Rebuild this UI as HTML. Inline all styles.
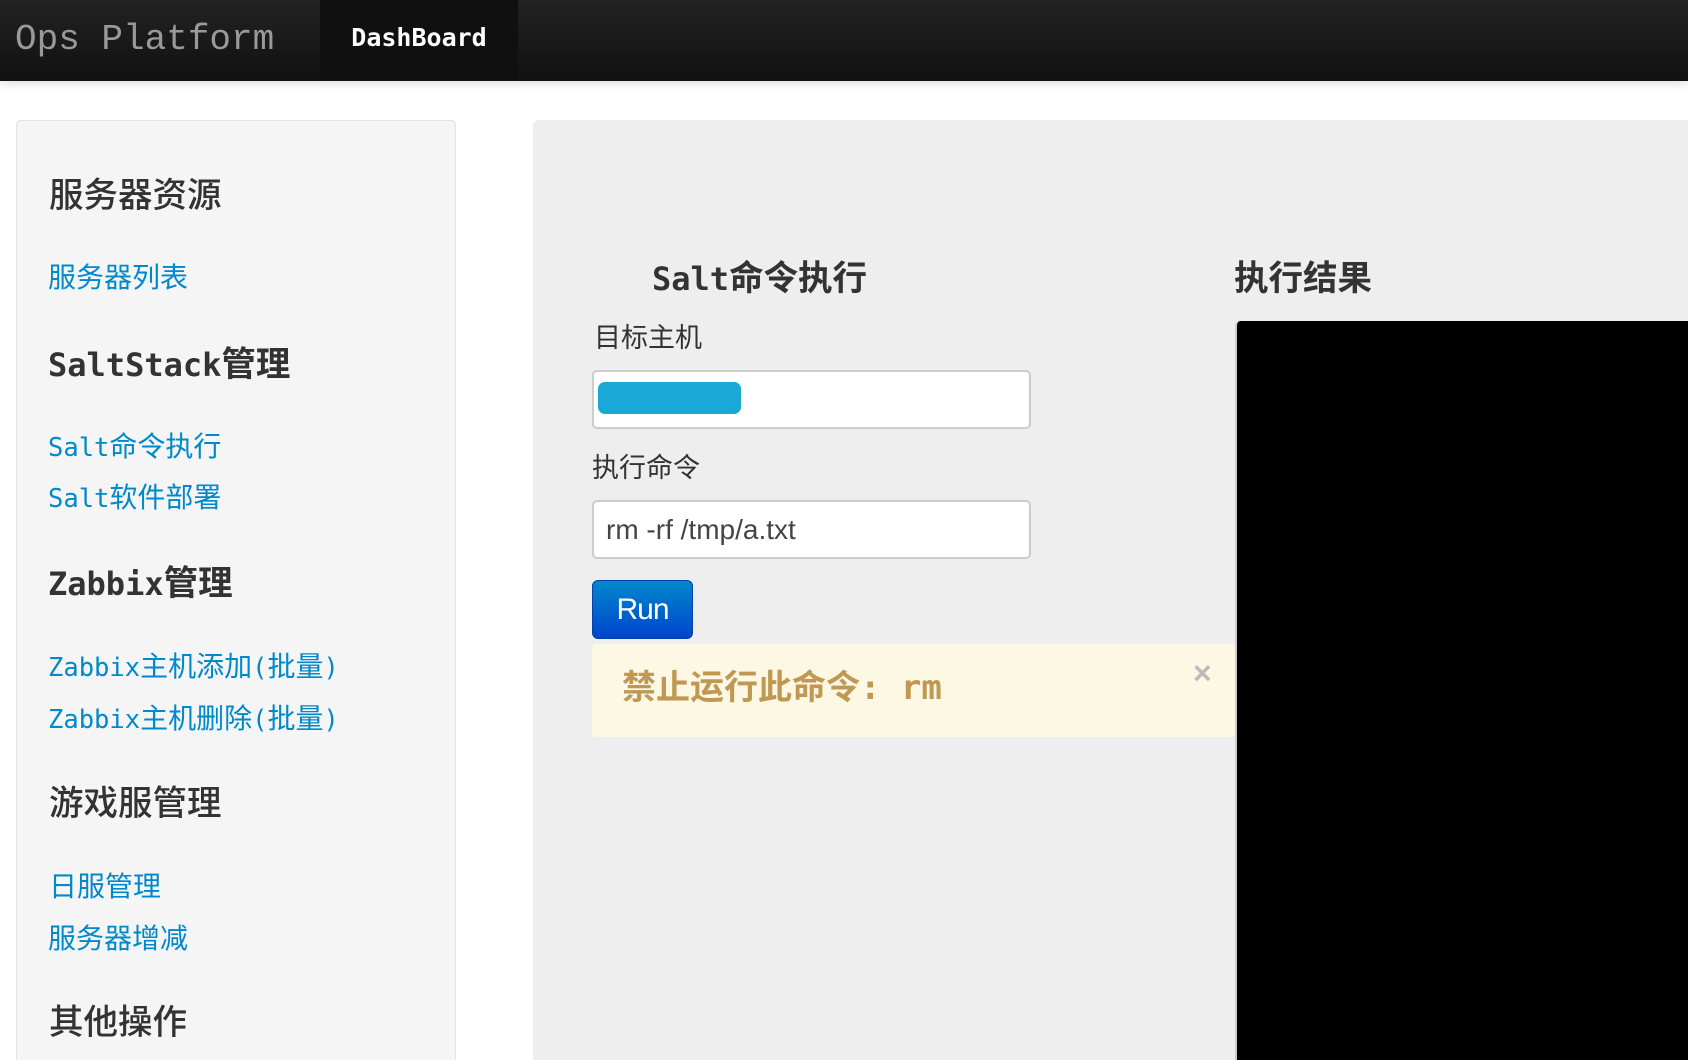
<!DOCTYPE html>
<html><head><meta charset="utf-8"><style>
*{margin:0;padding:0;box-sizing:border-box}
html,body{width:1688px;height:1060px;overflow:hidden}
body{background:#fff;font-family:"Liberation Sans","Noto Sans CJK SC",sans-serif}
#w{position:relative;width:1688px;height:1060px;overflow:hidden}
.nav{position:absolute;left:0;top:0;width:1688px;height:81px;background:linear-gradient(#222,#111);box-shadow:0 2px 10px rgba(0,0,0,.15)}
.brand{position:absolute;left:15px;top:15px;font-family:"Liberation Mono","DejaVu Sans Mono",monospace;font-size:36px;color:#999;line-height:50px}
.act{position:absolute;left:320px;top:0;width:198px;height:81px;background:#101010;color:#fff;font-family:"DejaVu Sans Mono",monospace;font-weight:bold;font-size:25px;line-height:76px;text-align:center}
.side{position:absolute;left:16px;top:120px;width:440px;height:940px;background:#f5f5f5;border:1px solid #e3e3e3;border-bottom:none;border-radius:5px 5px 0 0}
.t{position:absolute;white-space:nowrap}
.h{font-size:34.5px;color:#333;font-weight:bold;font-family:"DejaVu Sans Mono","Noto Sans CJK SC",sans-serif}
.h span{font-size:32px}
.hc{font-weight:500}
.l{font-size:28px;color:#0088cc;font-family:"DejaVu Sans Mono","Noto Sans CJK SC",sans-serif}
.l span{font-size:25.5px}
.main{position:absolute;left:533px;top:120px;width:1155px;height:940px;background:#eee;border-radius:6px 0 0 0}
.inp{position:absolute;left:592px;width:439px;height:59px;background:#fff;border:2px solid #ccc;border-radius:5px}
</style></head><body><div id="w">
<div class="nav"><div class="brand">Ops Platform</div><div class="act">DashBoard</div></div>
<div class="side"></div>
<div class="t h hc" style="left:49px;top:167px">服务器资源</div>
<div class="t l" style="left:48px;top:256px">服务器列表</div>
<div class="t h" style="left:48px;top:336px"><span>SaltStack</span>管理</div>
<div class="t l" style="left:48px;top:425px"><span>Salt</span>命令执行</div>
<div class="t l" style="left:48px;top:476px"><span>Salt</span>软件部署</div>
<div class="t h" style="left:48px;top:555px"><span>Zabbix</span>管理</div>
<div class="t l" style="left:48px;top:645px"><span>Zabbix</span>主机添加<span>(</span>批量<span>)</span></div>
<div class="t l" style="left:48px;top:697px"><span>Zabbix</span>主机删除<span>(</span>批量<span>)</span></div>
<div class="t h hc" style="left:49px;top:775px">游戏服管理</div>
<div class="t l" style="left:49px;top:865px">日服管理</div>
<div class="t l" style="left:48px;top:917px">服务器增减</div>
<div class="t h hc" style="left:49px;top:994px">其他操作</div>
<div class="main"></div>
<div class="t h" style="left:652px;top:250px"><span>Salt</span>命令执行</div>
<div class="t h" style="left:1234px;top:250px">执行结果</div>
<div style="position:absolute;left:1235px;top:321px;width:453px;height:739px;background:#000;border-radius:5px 0 0 0;border-left:2px solid #ccc"></div>
<div class="t" style="left:594px;top:316px;font-size:27px;color:#333">目标主机</div>
<div class="inp" style="top:370px"><div style="position:absolute;left:4px;top:10px;width:143px;height:32px;background:#1aa9d6;border-radius:7px"></div></div>
<div class="t" style="left:592px;top:446px;font-size:27px;color:#333">执行命令</div>
<div class="inp" style="top:500px"><div style="position:absolute;left:12px;top:12px;font-size:28px;color:#444">rm -rf /tmp/a.txt</div></div>
<div style="position:absolute;left:592px;top:580px;width:101px;height:59px;border-radius:6px;background:linear-gradient(#0088cc,#0044cc);border:1px solid #0044aa;color:#fff;font-size:30px;text-align:center;line-height:57px;letter-spacing:-1px">Run</div>
<div style="position:absolute;left:592px;top:644px;width:643px;height:93px;background:#fcf8e3;border-radius:5px 0 0 5px"></div>
<div class="t" style="left:622px;top:660px;font-size:34px;font-weight:bold;color:#c09853;font-family:'DejaVu Sans Mono','Noto Sans CJK SC',sans-serif">禁止运行此命令: rm</div>
<div class="t" style="left:1193px;top:655px;font-size:32px;font-weight:bold;color:#bbb">×</div>
</div></body></html>
